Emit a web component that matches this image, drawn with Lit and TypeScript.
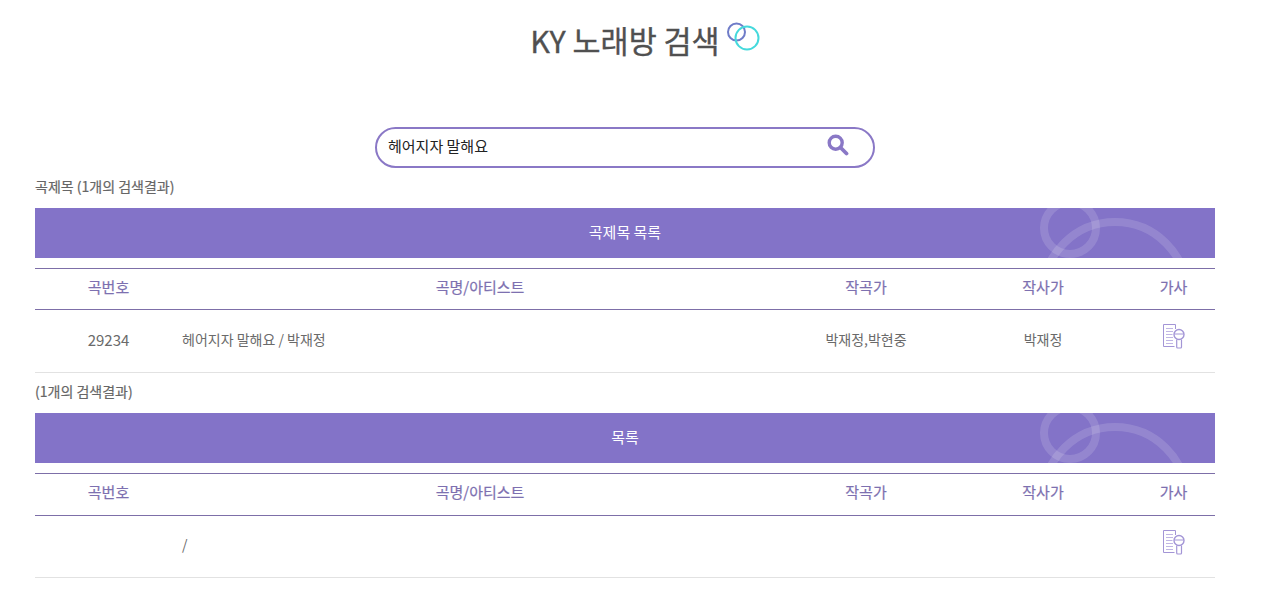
import { LitElement, html, css, svg } from "lit";
import { customElement } from "lit/decorators.js";

const lyricIcon = html`<svg class="lyric" viewBox="0 0 24 26" width="24" height="26" fill="none" stroke="#a395d6" stroke-width="1">
  <path d="M13.5 6V1.5H1.5V23.5H12.5" />
  <path d="M4 5.5H11M4 8.5H11M4 11.5H10.5M4 14.5H11M4 17.5H11M4 20.5H11" stroke="#c0b6e4" />
  <circle cx="17" cy="11.5" r="5" fill="#fff" stroke-width="1.4" />
  <path d="M12.5 11H21.5" />
  <path d="M14.7 16.5V24a1 1 0 0 0 1 1h2.8a1 1 0 0 0 1-1V16.5" stroke-width="1.2" />
</svg>`;

const bannerArt = svg`<svg class="art" width="180" height="50" viewBox="0 0 180 50" fill="none" stroke="#fff" stroke-opacity=".14">
  <circle cx="35" cy="20" r="26" stroke-width="8" />
  <circle cx="80" cy="86" r="72" stroke-width="8" />
</svg>`;

interface Row { no: string; title: string; composer: string; lyricist: string; }

@customElement("app-root")
export class AppRoot extends LitElement {
  static styles = css`
    :host {
      display: block;
      font-family: "Noto Sans CJK KR", "Noto Sans", sans-serif;
      color: #555;
      background: #fff;
      min-height: 613px;
      box-sizing: border-box;
      padding: 0 55px 0 35px;
    }
    .title {
      margin: 0;
      height: 127px;
      display: flex;
      justify-content: center;
      align-items: flex-start;
      padding: 18px 0 0 40px;
      box-sizing: border-box;
      font-size: 30.5px;
      font-weight: 400;
      line-height: 44px;
      color: #505050;
      -webkit-text-stroke: 0.35px #505050;
    }
    .rings { margin: 4px 0 0 6px; flex: none; }
    .search {
      width: 500px;
      height: 41px;
      box-sizing: border-box;
      margin: 0 auto;
      border: 2px solid #8a78c6;
      border-radius: 21px;
      display: flex;
      align-items: center;
      padding: 0 24px 0 11px;
    }
    .search input {
      flex: 1;
      border: 0;
      outline: 0;
      padding: 0 0 4px;
      font: 400 15px "Noto Sans CJK KR", sans-serif;
      color: #222;
      background: none;
    }
    .search svg { margin-top: -5px; }
    .count {
      margin: 0;
      font-size: 14px;
      font-weight: 400;
      line-height: 20px;
      height: 20px;
      color: #666;
      -webkit-text-stroke: 0.2px #666;
      position: relative;
      top: -1px;
    }
    section { padding-top: 9px; }
    .banner {
      position: relative;
      overflow: hidden;
      margin-top: 11px;
      height: 50px;
      background: #8373c8;
      color: #fff;
      font-size: 15px;
      font-weight: 400;
      line-height: 47px;
      text-align: center;
    }
    .art { position: absolute; right: 0; top: 0; }
    table {
      width: 100%;
      margin-top: 10px;
      border-collapse: collapse;
      table-layout: fixed;
    }
    th {
      height: 41px;
      padding: 0 0 5px;
      box-sizing: border-box;
      border-top: 1px solid #7d6fa8;
      border-bottom: 1px solid #7d6fa8;
      font-size: 15px;
      font-weight: 400;
      color: #7d70b0;
      -webkit-text-stroke: 0.2px #7d70b0;
      text-align: center;
    }
    td {
      height: 63px;
      padding: 0 0 4px;
      box-sizing: border-box;
      border-bottom: 1px solid #e2e2e2;
      font-size: 14px;
      color: #6a6a6a;
      text-align: center;
    }
    .second th { height: 42px; padding-bottom: 7px; }
    .second td { height: 62px; padding-bottom: 6px; }
    td.name { text-align: left; }
    td.no { font-size: 15px; }
    .c1 { width: 147px; }
    .c3 { width: 176px; }
    .c4 { width: 178px; }
    .c5 { width: 83px; }
    .lyric { display: block; margin: -6px auto 0; }
    .second .lyric { margin-top: -4px; }
  `;

  private section(cls: string, label: string, heading: string, r: Row) {
    return html`<section class=${cls}>
      <p class="count">${label}</p>
      <div class="banner">${heading}${bannerArt}</div>
      <table>
        <thead>
          <tr>
            <th class="c1">곡번호</th><th>곡명/아티스트</th><th class="c3">작곡가</th><th class="c4">작사가</th><th class="c5">가사</th>
          </tr>
        </thead>
        <tbody>
          <tr>
            <td class="no">${r.no}</td>
            <td class="name">${r.title} / ${r.composer ? "박재정" : ""}</td>
            <td>${r.composer}</td>
            <td>${r.lyricist}</td>
            <td>${lyricIcon}</td>
          </tr>
        </tbody>
      </table>
    </section>`;
  }

  render() {
    return html`
      <h1 class="title">KY 노래방 검색
        <svg class="rings" width="34" height="30" viewBox="0 0 34 30" fill="none" stroke-width="2">
          <circle cx="10.5" cy="10" r="8.5" stroke="#6f7cc8" />
          <circle cx="21" cy="16" r="11.5" stroke="#45d9dc" />
        </svg>
      </h1>
      <div class="search">
        <input value="헤어지자 말해요" />
        <svg width="22" height="22" viewBox="0 0 22 22" fill="none" stroke="#8a78c6">
          <circle cx="8.7" cy="8.7" r="6.5" stroke-width="3.4" />
          <path d="M13.5 13.5L19.5 19.5" stroke-width="3.8" stroke-linecap="round" />
        </svg>
      </div>
      ${this.section("first", "곡제목 (1개의 검색결과)", "곡제목 목록", { no: "29234", title: "헤어지자 말해요", composer: "박재정,박현중", lyricist: "박재정" })}
      ${this.section("second", "(1개의 검색결과)", "목록", { no: "", title: "", composer: "", lyricist: "" })}
    `;
  }
}
